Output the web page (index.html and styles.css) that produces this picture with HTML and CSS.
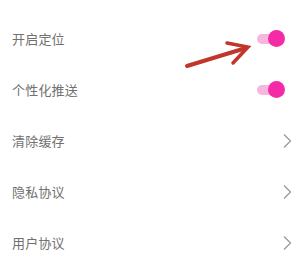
FILE: index.html
```html
<!DOCTYPE html>
<html lang="zh-CN">
<head>
    <meta charset="UTF-8">
    <meta name="viewport" content="width=device-width, initial-scale=1.0">
    <title>设置</title>
    <link rel="stylesheet" href="styles.css">
</head>
<body>

<div class="settings">
    <div class="row">
        <span class="label">开启定位</span>
        <span class="switch on"><span class="knob"></span></span>
    </div>
    <div class="row">
        <span class="label">个性化推送</span>
        <span class="switch on"><span class="knob"></span></span>
    </div>
    <div class="row">
        <span class="label">清除缓存</span>
        <svg class="chevron" width="9" height="16" viewBox="0 0 9 16"><path d="M1 1.5 L7.5 8 L1 14.5" fill="none" stroke="#9a9a9a" stroke-width="1.3"/></svg>
    </div>
    <div class="row">
        <span class="label">隐私协议</span>
        <svg class="chevron" width="9" height="16" viewBox="0 0 9 16"><path d="M1 1.5 L7.5 8 L1 14.5" fill="none" stroke="#9a9a9a" stroke-width="1.3"/></svg>
    </div>
    <div class="row">
        <span class="label">用户协议</span>
        <svg class="chevron" width="9" height="16" viewBox="0 0 9 16"><path d="M1 1.5 L7.5 8 L1 14.5" fill="none" stroke="#9a9a9a" stroke-width="1.3"/></svg>
    </div>
</div>

<!-- annotation arrow pointing at the first switch -->
<svg class="pointer" width="300" height="269" viewBox="0 0 300 269">
    <path d="M187 66 L246 48" fill="none" stroke="#c2352b" stroke-width="4" stroke-linecap="round"/>
    <path d="M227 43 L248 47 L233 63" fill="none" stroke="#c2352b" stroke-width="3.5" stroke-linecap="round" stroke-linejoin="miter"/>
</svg>

</body>
</html>
```

FILE: styles.css
```css
body {
    font-family: "Noto Sans CJK SC", "Noto Sans", sans-serif;
    margin: 0;
    padding: 0;
    background-color: #fff;
    width: 300px;
    height: 269px;
    overflow: hidden;
    position: relative;
}

.settings {
    padding-top: 13px;
}

.row {
    height: 51px;
    display: flex;
    align-items: center;
    justify-content: space-between;
    padding: 0 8px 0 12px;
}

.label {
    font-size: 13px;
    color: #707070;
    letter-spacing: 0.2px;
}

.switch {
    position: relative;
    width: 28px;
    height: 17px;
    margin-right: 7px;
}
.switch::before {
    content: "";
    position: absolute;
    left: 0;
    top: 4px;
    width: 24px;
    height: 10px;
    border-radius: 5px;
    background-color: #f8b6de;
}
.switch .knob {
    position: absolute;
    right: 0;
    top: 0;
    width: 17px;
    height: 17px;
    border-radius: 50%;
    background-color: #f52aa6;
}

.chevron {
    display: block;
}

.pointer {
    position: absolute;
    left: 0;
    top: 0;
    pointer-events: none;
}
```
